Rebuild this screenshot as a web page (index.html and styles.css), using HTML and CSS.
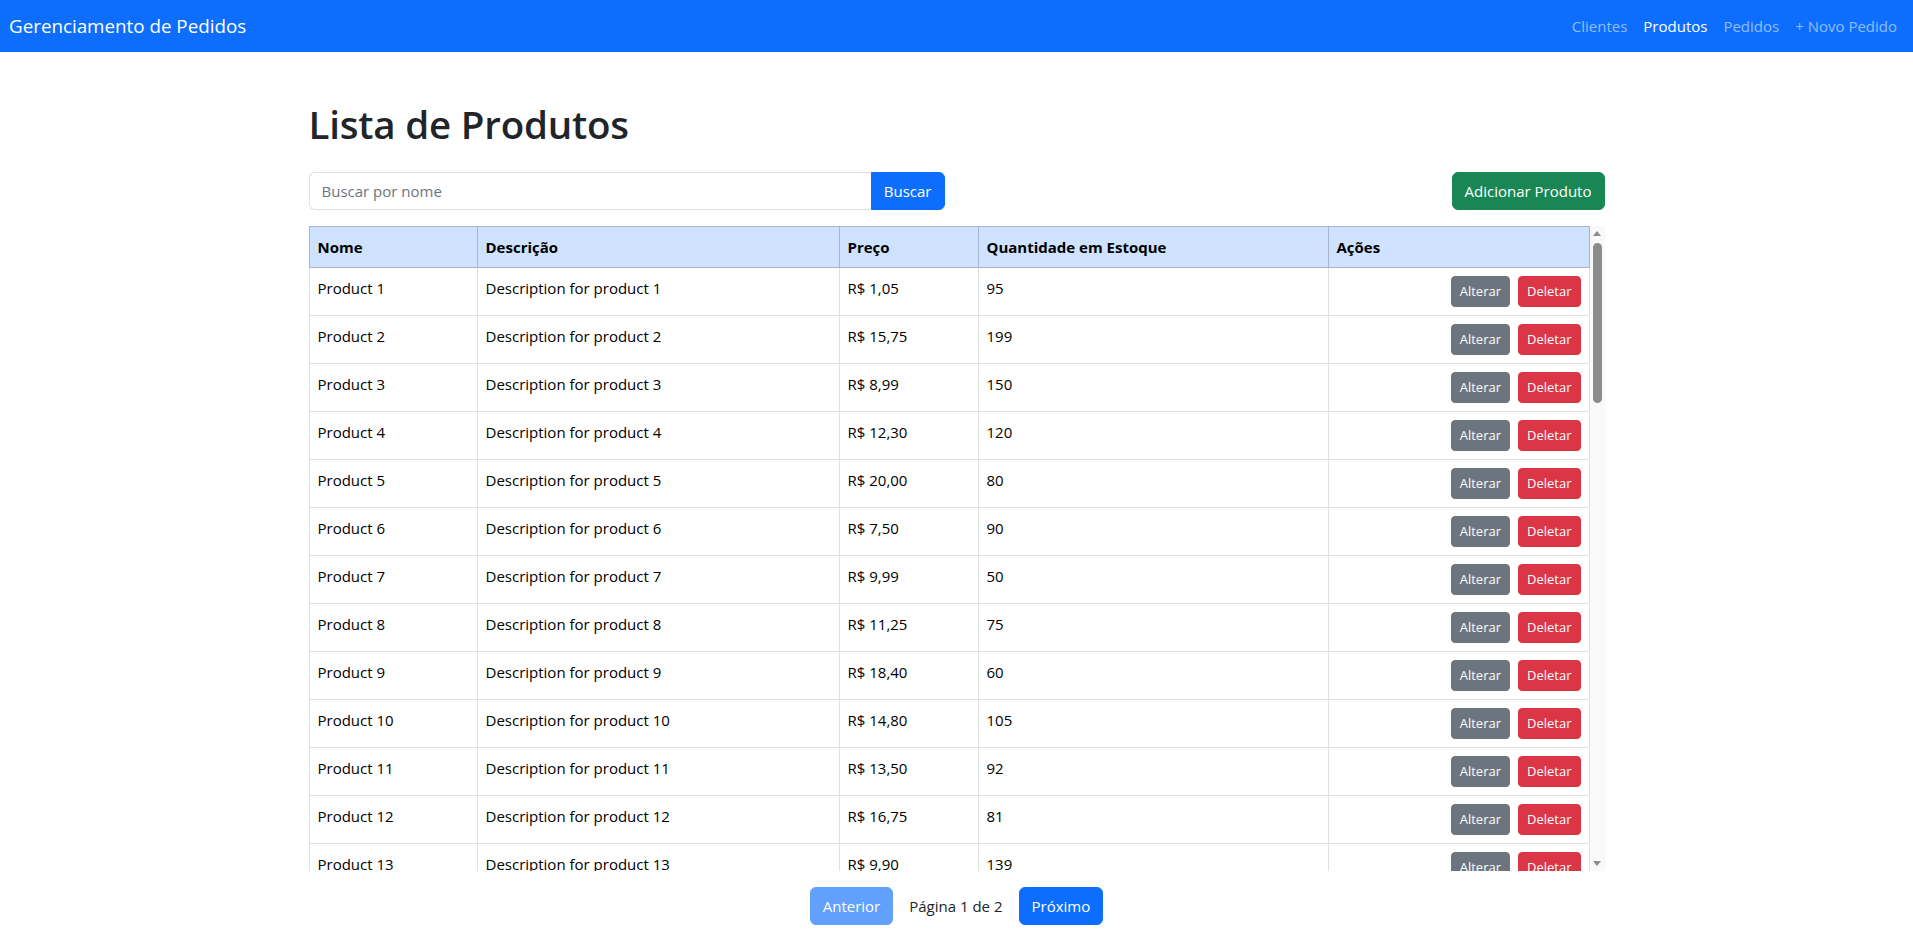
FILE: index.html
```html
<!DOCTYPE html>
<html lang="pt-BR">
<head>
<meta charset="utf-8">
<title>Gerenciamento de Pedidos</title>
<link rel="stylesheet" href="styles.css">
</head>
<body>
<nav class="navbar">
  <a class="brand" href="#">Gerenciamento de Pedidos</a>
  <ul class="nav">
    <li><a class="nav-link" href="#">Clientes</a></li>
    <li><a class="nav-link active" href="#">Produtos</a></li>
    <li><a class="nav-link" href="#">Pedidos</a></li>
    <li><a class="nav-link" href="#">+ Novo Pedido</a></li>
  </ul>
</nav>
<main class="container">
  <h1 class="title">Lista de Produtos</h1>
  <div class="toolbar">
    <form class="search">
      <input class="search-input" type="text" placeholder="Buscar por nome">
      <button class="btn btn-primary search-btn" type="button">Buscar</button>
    </form>
    <button class="btn btn-success" type="button">Adicionar Produto</button>
  </div>
  <div class="table-area">
    <div class="table-wrap">
      <table class="table">
        <colgroup>
          <col class="c-nome"><col class="c-desc"><col class="c-preco"><col class="c-qtd"><col class="c-acoes">
        </colgroup>
        <thead>
          <tr><th>Nome</th><th>Descrição</th><th>Preço</th><th>Quantidade em Estoque</th><th>Ações</th></tr>
        </thead>
        <tbody>
          <tr><td>Product 1</td><td>Description for product 1</td><td>R$ 1,05</td><td>95</td><td class="actions"><button class="btn-sm btn-secondary">Alterar</button><button class="btn-sm btn-danger">Deletar</button></td></tr>
          <tr><td>Product 2</td><td>Description for product 2</td><td>R$ 15,75</td><td>199</td><td class="actions"><button class="btn-sm btn-secondary">Alterar</button><button class="btn-sm btn-danger">Deletar</button></td></tr>
          <tr><td>Product 3</td><td>Description for product 3</td><td>R$ 8,99</td><td>150</td><td class="actions"><button class="btn-sm btn-secondary">Alterar</button><button class="btn-sm btn-danger">Deletar</button></td></tr>
          <tr><td>Product 4</td><td>Description for product 4</td><td>R$ 12,30</td><td>120</td><td class="actions"><button class="btn-sm btn-secondary">Alterar</button><button class="btn-sm btn-danger">Deletar</button></td></tr>
          <tr><td>Product 5</td><td>Description for product 5</td><td>R$ 20,00</td><td>80</td><td class="actions"><button class="btn-sm btn-secondary">Alterar</button><button class="btn-sm btn-danger">Deletar</button></td></tr>
          <tr><td>Product 6</td><td>Description for product 6</td><td>R$ 7,50</td><td>90</td><td class="actions"><button class="btn-sm btn-secondary">Alterar</button><button class="btn-sm btn-danger">Deletar</button></td></tr>
          <tr><td>Product 7</td><td>Description for product 7</td><td>R$ 9,99</td><td>50</td><td class="actions"><button class="btn-sm btn-secondary">Alterar</button><button class="btn-sm btn-danger">Deletar</button></td></tr>
          <tr><td>Product 8</td><td>Description for product 8</td><td>R$ 11,25</td><td>75</td><td class="actions"><button class="btn-sm btn-secondary">Alterar</button><button class="btn-sm btn-danger">Deletar</button></td></tr>
          <tr><td>Product 9</td><td>Description for product 9</td><td>R$ 18,40</td><td>60</td><td class="actions"><button class="btn-sm btn-secondary">Alterar</button><button class="btn-sm btn-danger">Deletar</button></td></tr>
          <tr><td>Product 10</td><td>Description for product 10</td><td>R$ 14,80</td><td>105</td><td class="actions"><button class="btn-sm btn-secondary">Alterar</button><button class="btn-sm btn-danger">Deletar</button></td></tr>
          <tr><td>Product 11</td><td>Description for product 11</td><td>R$ 13,50</td><td>92</td><td class="actions"><button class="btn-sm btn-secondary">Alterar</button><button class="btn-sm btn-danger">Deletar</button></td></tr>
          <tr><td>Product 12</td><td>Description for product 12</td><td>R$ 16,75</td><td>81</td><td class="actions"><button class="btn-sm btn-secondary">Alterar</button><button class="btn-sm btn-danger">Deletar</button></td></tr>
          <tr><td>Product 13</td><td>Description for product 13</td><td>R$ 9,90</td><td>139</td><td class="actions"><button class="btn-sm btn-secondary">Alterar</button><button class="btn-sm btn-danger">Deletar</button></td></tr>
          <tr><td>Product 14</td><td>Description for product 14</td><td>R$ 22,10</td><td>64</td><td class="actions"><button class="btn-sm btn-secondary">Alterar</button><button class="btn-sm btn-danger">Deletar</button></td></tr>
          <tr><td>Product 15</td><td>Description for product 15</td><td>R$ 5,45</td><td>210</td><td class="actions"><button class="btn-sm btn-secondary">Alterar</button><button class="btn-sm btn-danger">Deletar</button></td></tr>
        </tbody>
      </table>
    </div>
    <div class="scrollbar" aria-hidden="true">
      <div class="sb-arrow sb-up"></div>
      <div class="sb-track"><div class="sb-thumb"></div></div>
      <div class="sb-arrow sb-down"></div>
    </div>
  </div>
  <div class="pagination">
    <button class="btn btn-primary disabled" type="button">Anterior</button>
    <span class="page-info">Página 1 de 2</span>
    <button class="btn btn-primary" type="button">Próximo</button>
  </div>
</main>
</body>
</html>
```
FILE: styles.css
```css
* { box-sizing: border-box; }

html, body {
  margin: 0;
  padding: 0;
  background: #fff;
}

body {
  font-family: "Open Sans", "Noto Sans", "Liberation Sans", sans-serif;
  font-size: 15px;
  line-height: 24px;
  color: #212529;
}

/* Navbar */
.navbar {
  height: 52px;
  background: #0d6efd;
  display: flex;
  align-items: center;
  justify-content: space-between;
  padding: 0 8px;
}

.brand {
  color: #fff;
  text-decoration: none;
  font-size: 18.8px;
  line-height: 30px;
  padding-left: 1px;
}

.nav {
  list-style: none;
  margin: 0;
  padding: 0;
  display: flex;
}

.nav-link {
  display: block;
  padding: 0 8px;
  color: rgba(255, 255, 255, 0.55);
  text-decoration: none;
  line-height: 24px;
}

.nav-link.active { color: #fff; }

/* Container */
.container {
  width: 1296px;
  margin: 48px auto 0;
}

.title {
  margin: 0 0 24px;
  font-size: 38.5px;
  font-weight: 600;
  line-height: 48px;
  color: #212529;
  letter-spacing: -0.2px;
}

.toolbar {
  display: flex;
  align-items: center;
  justify-content: space-between;
  margin-bottom: 16px;
}

.search {
  display: flex;
  width: 636px;
  margin: 0;
}

.search-input {
  flex: 1;
  height: 38px;
  padding: 6px 12px;
  font: inherit;
  color: #212529;
  border: 1px solid #dee2e6;
  border-right: none;
  border-radius: 6px 0 0 6px;
  outline: none;
}

.search-input::placeholder { color: #6c757d; }

.btn {
  height: 38px;
  padding: 6px 12px;
  font: inherit;
  line-height: 24px;
  border: 1px solid transparent;
  border-radius: 6px;
  color: #fff;
  cursor: pointer;
}

.btn-primary { background: #0d6efd; border-color: #0d6efd; }
.btn-success { background: #198754; border-color: #198754; }
.btn-primary.disabled { opacity: 0.65; }

.search-btn {
  border-radius: 0 6px 6px 0;
}

/* Table area with scrollbar */
.table-area {
  display: flex;
  height: 645px;
}

.table-wrap {
  flex: 1;
  min-width: 0;
  overflow: hidden;
}

.scrollbar {
  width: 15px;
  flex: none;
  display: flex;
  flex-direction: column;
  background: #f9f9f9;
}

.sb-arrow {
  height: 15px;
  display: flex;
  align-items: center;
  justify-content: center;
}

.sb-up::before,
.sb-down::before {
  content: "";
  width: 0;
  height: 0;
  border-left: 4px solid transparent;
  border-right: 4px solid transparent;
}

.sb-up::before { border-bottom: 5px solid #8c8c8c; }
.sb-down::before { border-top: 5px solid #8c8c8c; }

.sb-track {
  flex: 1;
  padding: 2px 3px 0;
}

.sb-thumb {
  height: 160px;
  border-radius: 5px;
  background: #8c8c8c;
}

.table {
  width: 100%;
  border-collapse: collapse;
  table-layout: fixed;
  color: #000;
}

.c-nome { width: 168px; }
.c-desc { width: 362px; }
.c-preco { width: 139px; }
.c-qtd { width: 350px; }

.table th,
.table td {
  padding: 8px;
  text-align: left;
  vertical-align: top;
  border: 1px solid #dee2e6;
}

.table th {
  background: #cfe2ff;
  border-color: #a6b5cc;
  font-weight: 700;
}

.table td.actions {
  text-align: right;
  padding-top: 8px;
  padding-bottom: 8px;
  white-space: nowrap;
}

.btn-sm {
  height: 31px;
  padding: 4px 8px;
  font: inherit;
  font-size: 13px;
  line-height: 21px;
  border: 1px solid transparent;
  border-radius: 4px;
  color: #fff;
  vertical-align: top;
  cursor: pointer;
}

.btn-sm + .btn-sm { margin-left: 8px; }

.btn-secondary { background: #6c757d; border-color: #6c757d; }
.btn-danger { background: #dc3545; border-color: #dc3545; }

/* Pagination */
.pagination {
  display: flex;
  justify-content: center;
  align-items: center;
  gap: 16px;
  margin-top: 16px;
}

.page-info { color: #212529; }
```
